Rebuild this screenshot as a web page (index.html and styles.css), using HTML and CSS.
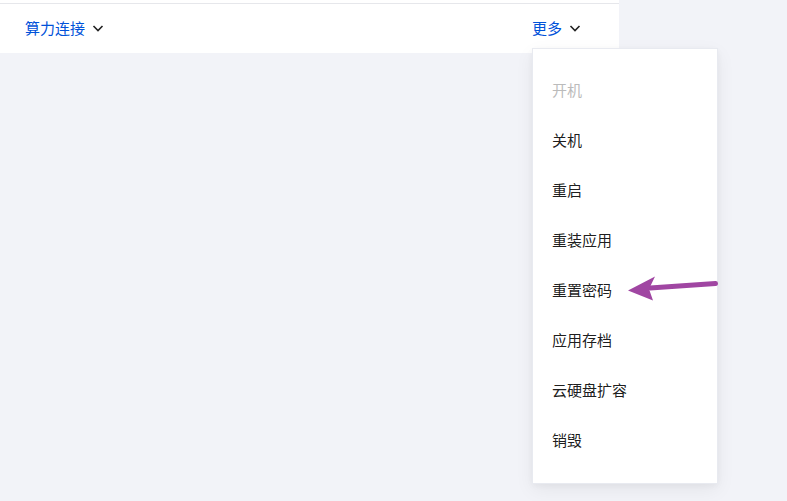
FILE: index.html
```html
<!DOCTYPE html>
<html lang="zh-CN">
<head>
<meta charset="utf-8">
<link rel="stylesheet" href="styles.css">
</head>
<body>
<div class="page">
  <div class="panel">
    <div class="panel-top"></div>
    <div class="toolbar">
      <span class="link">算力连接
        <svg class="chev" viewBox="0 0 16 16" width="16" height="16"><path d="M3.5 6l4.5 4.5L12.5 6" fill="none" stroke="#222" stroke-width="1.6"/></svg>
      </span>
      <span class="link more">更多
        <svg class="chev" viewBox="0 0 16 16" width="16" height="16"><path d="M3.5 6l4.5 4.5L12.5 6" fill="none" stroke="#222" stroke-width="1.6"/></svg>
      </span>
    </div>
  </div>
  <ul class="menu">
    <li class="disabled">开机</li>
    <li>关机</li>
    <li>重启</li>
    <li>重装应用</li>
    <li>重置密码</li>
    <li>应用存档</li>
    <li>云硬盘扩容</li>
    <li>销毁</li>
  </ul>
  <svg class="arrow" viewBox="0 0 100 30" width="100" height="30">
    <path d="M95.5 7.5 L30 12" stroke="#a046a2" stroke-width="5" stroke-linecap="round" fill="none"/>
    <path d="M8 14.5 L35 0.5 L29 13 L33 24.5 Z" fill="#a046a2"/>
  </svg>
</div>
</body>
</html>
```
FILE: styles.css
```css
html, body {
  margin: 0;
  padding: 0;
}
body {
  background: #f2f3f8;
  font-family: "Noto Sans CJK SC", "Noto Sans", sans-serif;
  font-size: 15px;
  width: 787px;
  height: 501px;
  overflow: hidden;
}
.page {
  position: relative;
  width: 787px;
  height: 501px;
}
.panel {
  width: 619px;
  background: #fff;
}
.panel-top {
  height: 3px;
  border-bottom: 1px solid #e6e7eb;
}
.toolbar {
  height: 49px;
  display: flex;
  align-items: center;
  justify-content: space-between;
  padding: 0 36px 2px 25px;
  box-sizing: border-box;
}
.link {
  display: flex;
  align-items: center;
  gap: 5px;
  color: #0052d9;
  line-height: 22px;
}
.chev {
  display: block;
}
.menu {
  position: absolute;
  left: 532px;
  top: 48px;
  width: 184px;
  margin: 0;
  padding: 16px 0 18px;
  list-style: none;
  background: #fff;
  border: 1px solid #e8eaf0;
  box-shadow: 0 6px 18px rgba(0, 0, 0, 0.06), 0 2px 6px rgba(0, 0, 0, 0.04);
}
.menu li {
  height: 50px;
  line-height: 50px;
  padding-left: 19px;
  color: rgba(0, 0, 0, 0.9);
}
.menu li.disabled {
  color: #bbbbbb;
}
.arrow {
  position: absolute;
  left: 620px;
  top: 276px;
}
```
